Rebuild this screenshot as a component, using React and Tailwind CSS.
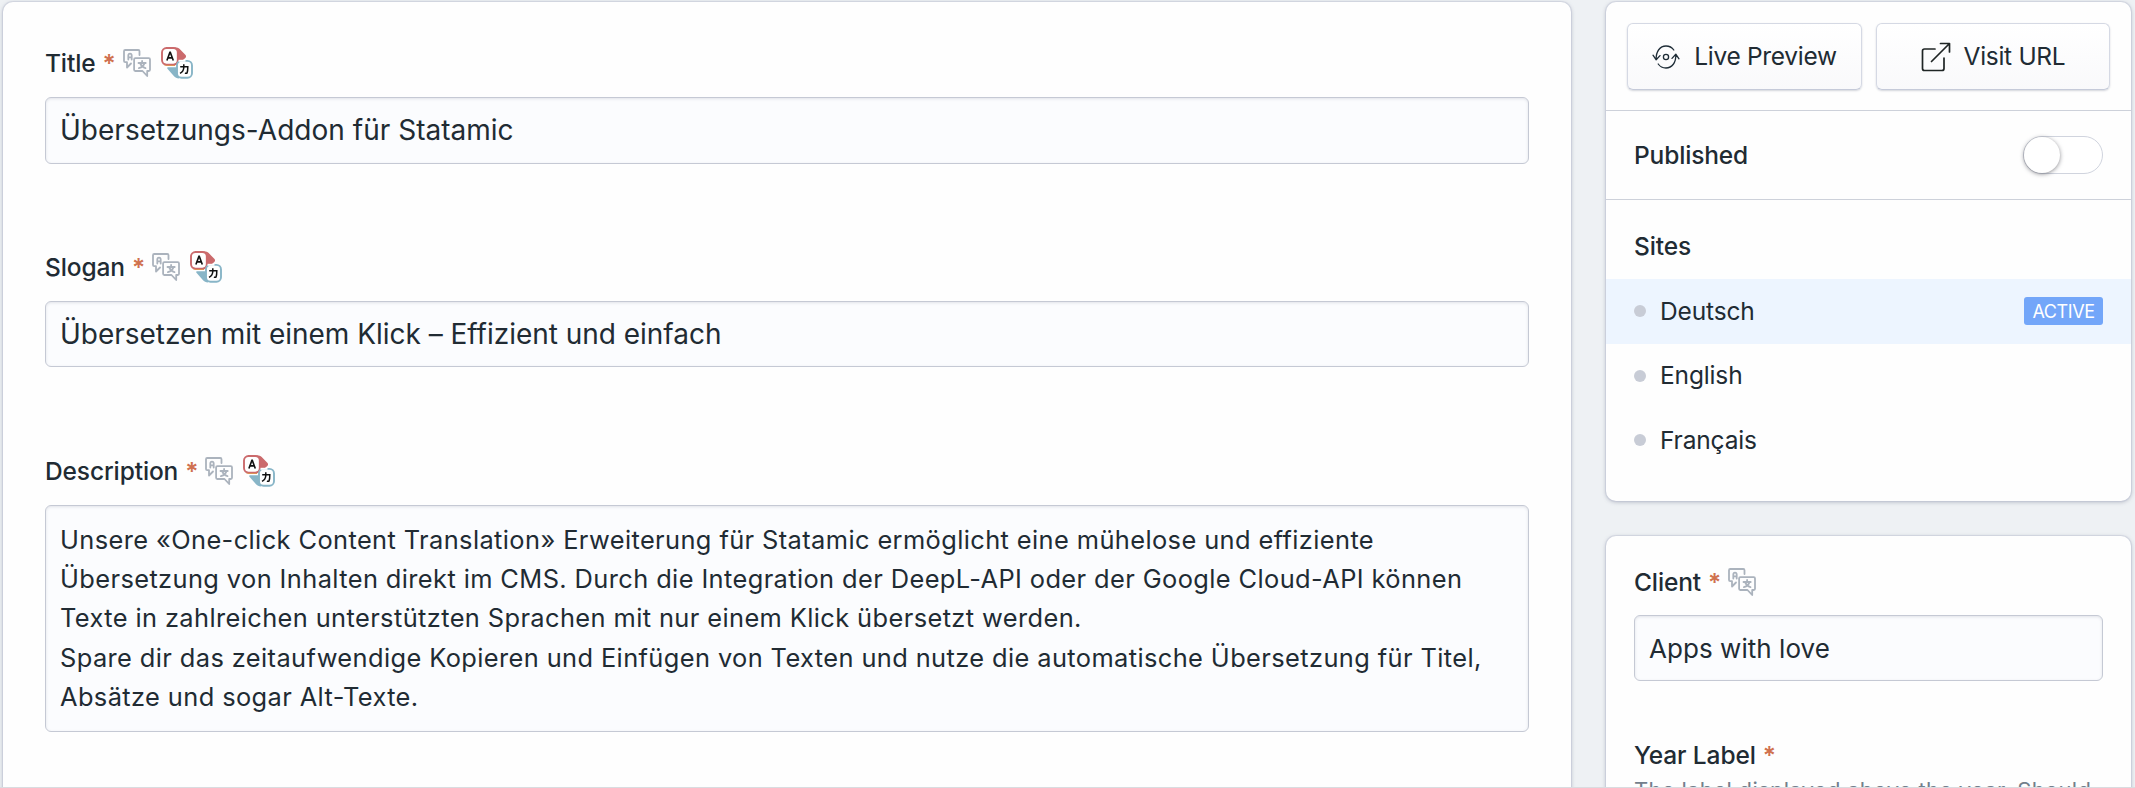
import React from 'react';

function TranslatableIcon() {
  return (
    <svg viewBox="0 0 28 28" className="h-7 w-7 shrink-0" fill="none" stroke="#abb3bd" strokeWidth="1.8" strokeLinejoin="round" strokeLinecap="round">
      <path d="M16.500 6V2.200C16.500 1.400 16.100 1 15.300 1H2.200C1.400 1 1 1.400 1 2.200V12c0 .8.400 1.200 1.200 1.200H4V18.500l4-4" />
      <path d="M5.300 10.500V6.600c0-1.200.6-2 1.700-2s1.700.8 1.700 2v3.900M5.300 8.400h3.400" />
      <path d="M12.300 9.200h13.500c.8 0 1.200.4 1.200 1.200v10.400c0 .8-.4 1.200-1.200 1.200h-1.600v5l-4.700-5h-7.200c-.8 0-1.200-.4-1.200-1.200V10.400c0-.8.4-1.200 1.200-1.200z" />
      <path d="M15.500 14h7.200M19.100 12v2M21.500 14c-.6 2.500-2.600 4.400-5.600 5.200M17.300 14.600c.9 2.200 2.700 3.900 5.200 4.600" />
    </svg>
  );
}

function TranslateIcon() {
  return (
    <svg viewBox="0 0 32 32" className="h-8 w-8 shrink-0" fill="none">
      <path d="M5 .2h9.500c1.500 0 3 .7 4.200 1.900l5.600 5.700c1 1 1 2.200 0 3.200l-6 5c-1.300 1.300-2.800 2-4.300 2H5z" fill="#cb6a6c" />
      <path d="M7 20.200h11v11.200c-2.300 0-3.800-.8-5.200-2.400l-6.300-7.300c-.6-.7-.4-1.500.5-1.500z" fill="#88b5c7" />
      <rect x="1" y="1" width="15.800" height="16.600" rx="4.500" fill="#fff" stroke="#cb6a6c" strokeWidth="1.900" />
      <path d="M3.500 18c.7.400 1.500.5 2.500.5h8" stroke="#dd9257" strokeWidth="1" />
      <rect x="16" y="13.900" width="15" height="16.800" rx="4.500" fill="#fff" stroke="#88b5c7" strokeWidth="1.900" />
      <path d="M17.500 13.800h7" stroke="#fff" strokeWidth="2" />
      <path d="m5.900 13.600 3-8.200h.400l3 8.200M6.900 10.900h4.400" stroke="#111" strokeWidth="1.600" />
      <path d="M19.200 19.800h7.600c0 3-.2 4.800-.7 6-.3.600-1 .7-2.200.4M22.800 17.200v3c0 2.800-1.300 4.900-3.800 6.200" stroke="#111" strokeWidth="1.500" />
    </svg>
  );
}

function LivePreviewIcon() {
  return (
    <svg viewBox="0 0 28 24" className="h-6 w-7 shrink-0" fill="none" stroke="#1f2d37" strokeWidth="1.300" strokeLinecap="round" strokeLinejoin="round">
      <path d="M4.200 14.500C3.800 6.500 8 1 14 1c3.300 0 6 1.400 7.800 4M1 10.200l3.200 4.600 3.800-4.200" />
      <path d="M23.800 9.500C24.200 17.500 20 23 14 23c-3.300 0-6-1.400-7.800-4M27 13.800l-3.200-4.600-3.800 4.200" />
      <circle cx="14" cy="12" r="2.600" />
    </svg>
  );
}

function ExternalIcon() {
  return (
    <svg viewBox="0 0 30 30" className="h-[30px] w-[30px] shrink-0" fill="none" stroke="#1f2525" strokeWidth="1.700" strokeLinecap="round" strokeLinejoin="round">
      <path d="M14 7H3.500C2.300 7 1.500 7.800 1.500 9v17.500c0 1.200.8 2 2 2H21c1.200 0 2-.8 2-2V16" />
      <path d="M10.500 19.500 28 2M19.500 1.500h9v8.500" />
    </svg>
  );
}

function Label({ text, translatable, translate }) {
  return (
    <div className="flex h-8 items-center text-[24.5px] font-medium leading-8 tracking-[-0.12px]">
      <span>{text}</span>
      <span className="ml-[7px] mr-[7px] font-semibold text-[#d0714f]">*</span>
      {translatable && <TranslatableIcon />}
      {translate && <span className="ml-2.5"><TranslateIcon /></span>}
    </div>
  );
}

const inputClass = 'rounded-md border border-[#c5c9d4] bg-[#fbfcfe] shadow-[inset_0_1px_3px_rgba(40,50,80,0.12)]';
const cardClass = 'bg-[#fefefe] shadow-[0_0_0_1px_rgba(190,196,212,0.4),0_1px_4px_rgba(60,70,100,0.35)]';
const buttonClass = 'flex h-[67px] items-center justify-center rounded-md border border-[#d5d9e4] border-b-[#c5cad9] bg-linear-to-b from-white to-[#f9f9fb] tracking-[-0.3px] shadow-[0_1px_2px_rgba(40,50,80,0.2)]';

const sites = [
  { name: 'Deutsch', active: true },
  { name: 'English' },
  { name: 'Français' },
];

const description = [
  'Unsere «One-click Content Translation» Erweiterung für Statamic ermöglicht eine mühelose und effiziente',
  'Übersetzung von Inhalten direkt im CMS. Durch die Integration der DeepL-API oder der Google Cloud-API können',
  'Texte in zahlreichen unterstützten Sprachen mit nur einem Klick übersetzt werden.',
  'Spare dir das zeitaufwendige Kopieren und Einfügen von Texten und nutze die automatische Übersetzung für Titel,',
  'Absätze und sogar Alt-Texte.',
];

function App() {
  return (
    <div className="flex h-[788px] w-[2135px] items-start gap-[35px] overflow-hidden border-b border-[#d9dce0] bg-[#eef1f4] pl-[3px] pt-0.5 font-['Inter',sans-serif] text-[#212b33]">
      <main className={`h-[800px] w-[1568px] shrink-0 rounded-t-[10px] px-[42px] pt-[45px] ${cardClass}`}>
        <Label text="Title" translatable translate />
        <div className={`mt-[18px] flex h-[67px] items-center px-3.5 pb-0.5 text-[28px] tracking-[0.02px] ${inputClass}`}>
          <span className="whitespace-nowrap">Übersetzungs-Addon für Statamic</span>
        </div>
        <div className="mt-[87px]"><Label text="Slogan" translatable translate /></div>
        <div className={`mt-[18px] flex h-[66px] items-center px-3.5 text-[28px] tracking-[-0.02px] ${inputClass}`}>
          <span className="whitespace-nowrap">Übersetzen mit einem Klick – Effizient und einfach</span>
        </div>
        <div className="mt-[88px]"><Label text="Description" translatable translate /></div>
        <div className={`mt-[18px] h-[227px] px-3.5 pt-3.5 text-[25.4px] leading-[39.2px] tracking-[0.4px] ${inputClass}`}>
          {description.map((line) => (
            <p key={line} className="whitespace-nowrap">{line}</p>
          ))}
        </div>
      </main>

      <aside className="w-[525px] shrink-0">
        <div className={`h-[499px] rounded-[10px] ${cardClass}`}>
          <div className="flex h-[109px] gap-3.5 border-b border-[#cdd1da] px-[21px] pt-[21px] text-[24.5px]">
            <button className={`w-[235px] gap-3.5 ${buttonClass}`}>
              <LivePreviewIcon />
              <span>Live Preview</span>
            </button>
            <button className={`w-[234px] gap-[13px] ${buttonClass}`}>
              <ExternalIcon />
              <span>Visit URL</span>
            </button>
          </div>
          <div className="flex h-[89px] items-center justify-between border-b border-[#cdd1da] px-7">
            <span className="text-[24.5px] font-medium tracking-[-0.15px]">Published</span>
            <div className="h-[38px] w-20 rounded-full border border-[#d0d4de] bg-white">
              <div className="h-9 w-9 rounded-full bg-white shadow-[0_1px_4px_rgba(30,30,40,0.5)]" />
            </div>
          </div>
          <h2 className="h-[79px] px-7 pt-[30px] text-[24.5px] font-medium leading-8 tracking-[-0.1px]">Sites</h2>
          {sites.map((site) => (
            <div
              key={site.name}
              className={`flex h-[64.5px] items-center px-7 text-[24.5px] tracking-[-0.15px] ${site.active ? 'bg-[#edf5ff]' : ''}`}
            >
              <span className="mr-3.5 h-3 w-3 rounded-full bg-[#c8ccd6]" />
              <span>{site.name}</span>
              {site.active && (
                <span className="ml-auto flex h-7 w-[79px] items-center justify-center rounded-[3px] bg-[#73a6f9] text-[18px] tracking-[-0.4px] text-white">ACTIVE</span>
              )}
            </div>
          ))}
        </div>

        <div className={`mt-[35px] h-[270px] rounded-[10px] px-7 pt-[30px] ${cardClass}`}>
          <Label text="Client" translatable />
          <div className={`mt-[17px] flex h-[66px] items-center px-3.5 text-[26px] tracking-[0.05px] ${inputClass}`}>
            <span>Apps with love</span>
          </div>
          <div className="mt-[58px]"><Label text="Year Label" /></div>
          <p className="mt-[3px] whitespace-nowrap text-[22px] leading-8 tracking-[0.29px] text-[#737f8c]">The label displayed above the year. Should</p>
        </div>
      </aside>
    </div>
  );
}

export default App;
